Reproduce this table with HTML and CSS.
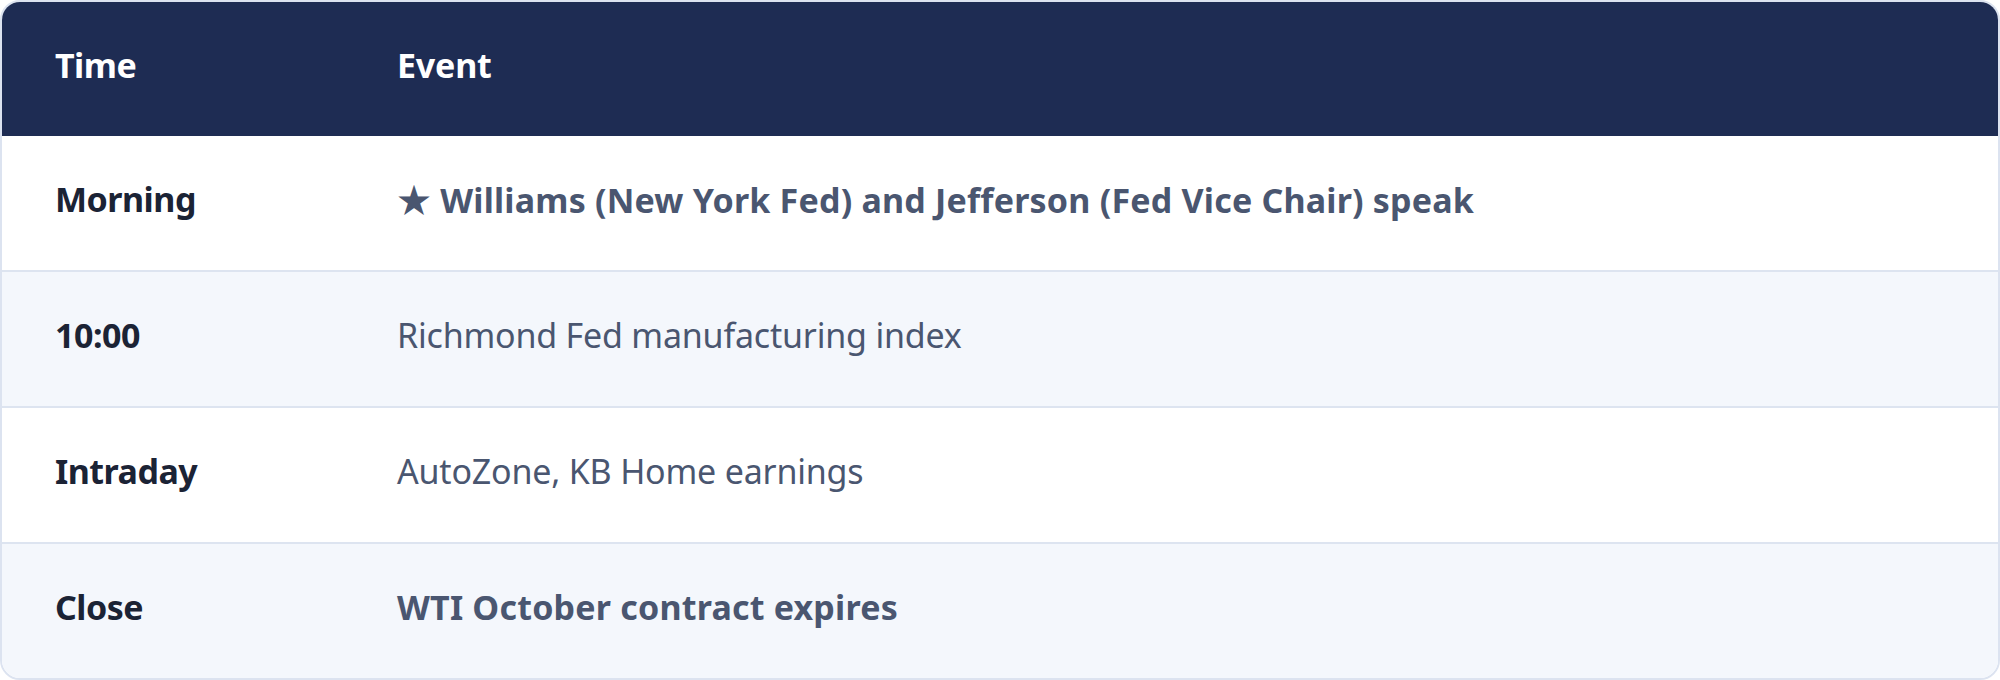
FILE: index.html
```html
<!DOCTYPE html>
<html lang="en">
<head>
<meta charset="utf-8">
<title>Schedule</title>
<link rel="stylesheet" href="styles.css">
</head>
<body>
<div class="card">
  <div class="row head">
    <div class="cell time">Time</div>
    <div class="cell event">Event</div>
  </div>
  <div class="row">
    <div class="cell time">Morning</div>
    <div class="cell event strong"><span class="star">★</span> Williams (New York Fed) and Jefferson (Fed Vice Chair) speak</div>
  </div>
  <div class="row alt">
    <div class="cell time">10:00</div>
    <div class="cell event">Richmond Fed manufacturing index</div>
  </div>
  <div class="row">
    <div class="cell time">Intraday</div>
    <div class="cell event">AutoZone, KB Home earnings</div>
  </div>
  <div class="row alt last">
    <div class="cell time">Close</div>
    <div class="cell event strong">WTI October contract expires</div>
  </div>
</div>
</body>
</html>
```

FILE: styles.css
```css
html, body {
  margin: 0;
  padding: 0;
  background: #ffffff;
}

body {
  font-family: "Noto Sans", "Noto Sans CJK KR", sans-serif;
  width: 2000px;
  height: 680px;
}

.card {
  box-sizing: border-box;
  width: 2000px;
  height: 680px;
  border: 2px solid #dce3f0;
  border-radius: 20px;
  overflow: hidden;
  display: flex;
  flex-direction: column;
}

.row {
  display: grid;
  grid-template-columns: 342px 1fr;
  align-items: center;
  height: 134px;
  flex: none;
  background: #ffffff;
  border-bottom: 2px solid #dde4f0;
}

.row.alt {
  background: #f4f7fc;
}

.row.last {
  border-bottom: none;
}

.row.head {
  background: #1e2c53;
  border-bottom: none;
}

.cell {
  padding-left: 53px;
  padding-bottom: 8px;
  font-size: 34px;
  line-height: 42px;
}

.time {
  font-weight: 700;
  color: #1b2335;
  letter-spacing: -0.5px;
}

.event {
  color: #4a5670;
  font-weight: 400;
  letter-spacing: -0.2px;
}

.event.strong {
  font-weight: 700;
  letter-spacing: 0.2px;
}

.head .cell {
  color: #ffffff;
  font-weight: 700;
}

.star {
  font-family: "Noto Sans CJK KR", sans-serif;
  color: #4a5670;
}
```
